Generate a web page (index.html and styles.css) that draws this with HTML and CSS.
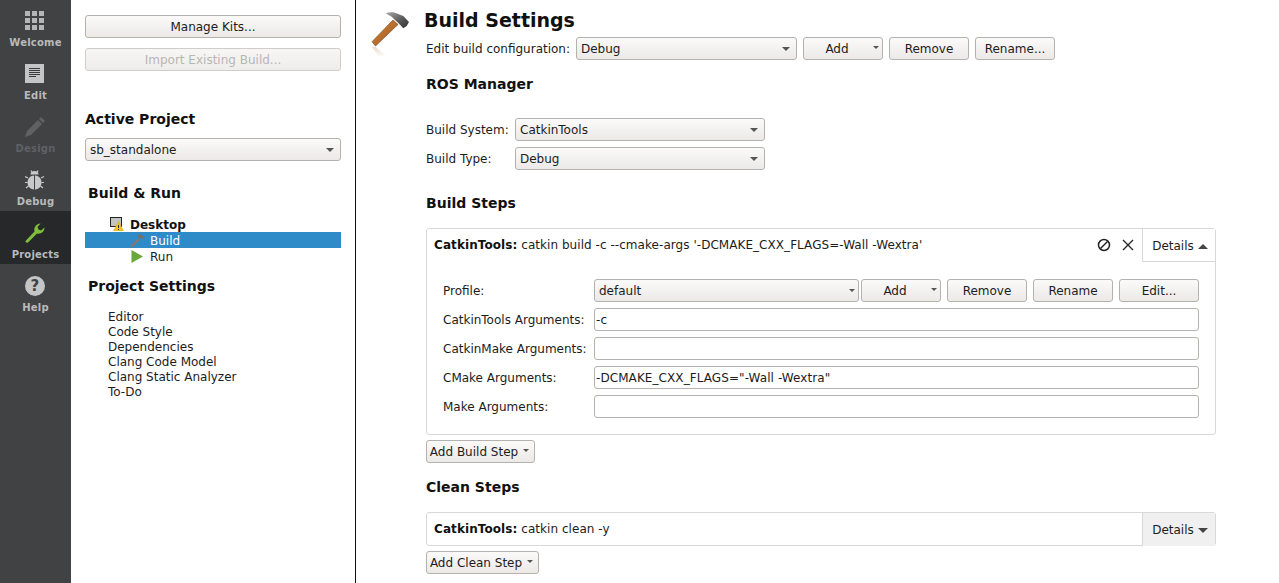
FILE: index.html
```html
<!DOCTYPE html>
<html lang="en">
<head>
<meta charset="utf-8">
<title>Projects</title>
<link rel="stylesheet" href="styles.css">
</head>
<body>
<div class="app">
  <nav class="rail">
    <div class="mode">
      <svg class="mode-icon" width="22" height="22" viewBox="0 0 22 22"><g fill="#b4b5b6"><rect x="0" y="0" width="5" height="5"/><rect x="7" y="0" width="5" height="5"/><rect x="14" y="0" width="5" height="5"/><rect x="0" y="7" width="5" height="5"/><rect x="7" y="7" width="5" height="5"/><rect x="14" y="7" width="5" height="5"/><rect x="0" y="14" width="5" height="5"/><rect x="7" y="14" width="5" height="5"/><rect x="14" y="14" width="5" height="5"/></g></svg>
      <span>Welcome</span>
    </div>
    <div class="mode">
      <svg class="mode-icon" width="22" height="22" viewBox="0 0 22 22"><rect x="0" y="0" width="19" height="19" fill="#c4c5c6"/><path d="M4 4.500h11M4 6.500h11M4 8.500h11M4 10.500h11M4 12.500h7" stroke="#3a3b3c" stroke-width="1"/></svg>
      <span>Edit</span>
    </div>
    <div class="mode mode-off">
      <svg class="mode-icon" width="22" height="22" viewBox="0 0 22 22"><path d="M0 20l2-6L13 3l4 4L6 18z M14 2l2-2 4 4-2 2z" fill="#5f6163"/></svg>
      <span>Design</span>
    </div>
    <div class="mode">
      <svg class="mode-icon" width="22" height="22" viewBox="0 0 22 22"><g fill="#c8c9ca"><path d="M5.500 4.500a4 3.500 0 0 1 8 0z"/><path d="M9 5.500v14C5.500 19.500 2.500 16.500 2.500 12.500 2.500 9 4.500 6 9 5.500z"/><path d="M10 5.500v14c3.500 0 6.500-3 6.500-7C16.500 9 14.500 6 10 5.500z"/></g><path d="M6 0.500l1 2M13 0.500l-1 2M0 6.500l3 1.500M19 6.500l-3 1.500M0 12.500h2.500M19 12.500h-2.500M1 18l2.500-2M18 18l-2.500-2" stroke="#c8c9ca" stroke-width="1.200" fill="none"/></svg>
      <span>Debug</span>
    </div>
    <div class="mode mode-active">
      <svg class="mode-icon" width="22" height="22" viewBox="0 0 22 22"><path d="M0.500 18L9.500 8.500C8.500 5 10.500 1 15.500 0.500L12.500 4l1 2.500 2.500 1L19.500 4.500C19.500 9 15.500 11.500 12 10.500L3 19.500c-1 .8-3-.5-2.500-1.500z" fill="#7fc03a"/></svg>
      <span>Projects</span>
    </div>
    <div class="mode">
      <svg class="mode-icon" width="22" height="22" viewBox="0 0 22 22"><circle cx="10" cy="10" r="10" fill="#c4c5c6"/><text x="10" y="15" text-anchor="middle" class="help-mark">?</text></svg>
      <span>Help</span>
    </div>
  </nav>

  <aside class="side">
    <button class="btn btn-wide">Manage Kits...</button>
    <button class="btn btn-wide btn-off">Import Existing Build...</button>
    <h2 class="side-h active-h">Active Project</h2>
    <div class="combo combo-side"><span>sb_standalone</span><i class="arrow"></i></div>
    <h2 class="side-h inset build-run">Build &amp; Run</h2>
    <div class="tree">
      <div class="tree-row tree-top">
        <svg class="tree-kit" width="14" height="14" viewBox="0 0 14 14"><rect x="0.500" y="0.500" width="11" height="9" fill="#c4c4c4" stroke="#222"/><path d="M8.500 4.500L13.500 14H3.500z" fill="#f4c21f" stroke="#d8a510" stroke-width=".5"/><path d="M8.500 8v3M8.500 12v1" stroke="#333"/></svg>
        <b>Desktop</b>
      </div>
      <div class="tree-row tree-sub tree-sel">
        <svg width="15" height="15" viewBox="0 0 15 15"><path d="M0.500 13L8 5.500l1.500 1.500L2 14.500z" fill="#8f7562"/><path d="M7 3C9 1 11 1 12 2l2 2.500-1 1.500-2-1-1.500 1z" fill="#707070"/></svg>
        <span>Build</span>
      </div>
      <div class="tree-row tree-sub">
        <svg width="15" height="15" viewBox="0 0 15 15"><path d="M1.500 1L13 7.500 1.500 14z" fill="#6aa83a"/></svg>
        <span>Run</span>
      </div>
    </div>
    <h2 class="side-h inset settings-h">Project Settings</h2>
    <ul class="links">
      <li>Editor</li>
      <li>Code Style</li>
      <li>Dependencies</li>
      <li>Clang Code Model</li>
      <li>Clang Static Analyzer</li>
      <li>To-Do</li>
    </ul>
  </aside>

  <main class="main">
    <div class="hammer-col">
      <svg width="38" height="50" viewBox="0 0 38 50">
        <defs>
          <linearGradient id="handle" x1="0" y1="0" x2="1" y2="1"><stop offset="0" stop-color="#d98b3e"/><stop offset="1" stop-color="#96531c"/></linearGradient>
          <linearGradient id="head" x1="0" y1="0" x2="1" y2="1"><stop offset="0" stop-color="#a8a8a8"/><stop offset=".6" stop-color="#555"/><stop offset="1" stop-color="#333"/></linearGradient>
          <linearGradient id="shade" x1="0" y1="0" x2="0" y2="1"><stop offset="0" stop-color="#ecd9c8"/><stop offset="1" stop-color="#ffffff"/></linearGradient>
        </defs>
        <path d="M1 36L4.500 36 16 46H8z" fill="url(#shade)"/>
        <path d="M1 30.700L22 9l5 4.500L4.500 35z" fill="url(#handle)" stroke="#7a4516" stroke-width=".6"/>
        <path d="M14.700 2.300C18 1 21 1 24 1.700L32.300 5 38 11 35.700 15 32.300 17.300 28.300 13 24 9 20.700 5.700z" fill="url(#head)"/>
      </svg>
    </div>
    <div class="content">
      <h1 class="title">Build Settings</h1>
      <div class="row config-row">
        <label class="config-label">Edit build configuration:</label>
        <div class="combo combo-config"><span>Debug</span><i class="arrow"></i></div>
        <button class="btn btn-add"><span>Add</span><i class="arrow arrow-s"></i></button>
        <button class="btn btn-80">Remove</button>
        <button class="btn btn-80">Rename...</button>
      </div>
      <h3 class="sec ros-h">ROS Manager</h3>
      <div class="row ros-row">
        <label class="ros-label">Build System:</label>
        <div class="combo combo-ros"><span>CatkinTools</span><i class="arrow"></i></div>
      </div>
      <div class="row ros-row ros-row-2">
        <label class="ros-label">Build Type:</label>
        <div class="combo combo-ros"><span>Debug</span><i class="arrow"></i></div>
      </div>
      <h3 class="sec steps-h">Build Steps</h3>
      <section class="step">
        <header class="step-head">
          <div class="step-text"><b>CatkinTools:</b> catkin build -c --cmake-args '-DCMAKE_CXX_FLAGS=-Wall -Wextra'</div>
          <svg class="step-ic" width="14" height="14" viewBox="0 0 14 14"><circle cx="7" cy="7" r="5.500" fill="none" stroke="#222" stroke-width="1.500"/><path d="M3.500 10.500l7-7" stroke="#222" stroke-width="1.500"/></svg>
          <svg class="step-ic step-x" width="14" height="14" viewBox="0 0 14 14"><path d="M2 2l10 10M12 2L2 12" stroke="#222" stroke-width="1.300"/></svg>
          <div class="details details-open"><span>Details</span><i class="tri tri-up"></i></div>
        </header>
        <div class="step-body">
          <div class="row field">
            <label class="f-label">Profile:</label>
            <div class="combo combo-profile"><span>default</span><i class="arrow arrow-s"></i></div>
            <button class="btn btn-add btn-add-2"><span>Add</span><i class="arrow arrow-s"></i></button>
            <button class="btn btn-80">Remove</button>
            <button class="btn btn-80">Rename</button>
            <button class="btn btn-80">Edit...</button>
          </div>
          <div class="row field"><label class="f-label">CatkinTools Arguments:</label><input class="input" type="text" value="-c"></div>
          <div class="row field"><label class="f-label">CatkinMake Arguments:</label><input class="input" type="text" value=""></div>
          <div class="row field"><label class="f-label">CMake Arguments:</label><input class="input" type="text" value="-DCMAKE_CXX_FLAGS=&quot;-Wall -Wextra&quot;"></div>
          <div class="row field"><label class="f-label">Make Arguments:</label><input class="input" type="text" value=""></div>
        </div>
      </section>
      <button class="btn btn-step"><span>Add Build Step</span><i class="arrow arrow-xs"></i></button>
      <h3 class="sec clean-h">Clean Steps</h3>
      <section class="step step-closed">
        <header class="step-head">
          <div class="step-text"><b>CatkinTools:</b> catkin clean -y</div>
          <div class="details"><span>Details</span><i class="tri"></i></div>
        </header>
      </section>
      <button class="btn btn-step btn-step-2"><span>Add Clean Step</span><i class="arrow arrow-xs"></i></button>
    </div>
  </main>
</div>
</body>
</html>
```
FILE: styles.css
```css
* { box-sizing: border-box; }
html, body { margin: 0; height: 100%; overflow: hidden; background: #fff; }
body { font-family: "DejaVu Sans", sans-serif; font-size: 12px; color: #1c1c1c; }
.app { display: flex; height: 583px; width: 1279px; }

.rail { flex: 0 0 71px; background: #404244; display: flex; flex-direction: column; }
.mode { height: 53px; flex: none; display: flex; flex-direction: column; align-items: center; padding-top: 12px; font-size: 10px; font-weight: 700; color: #b9babb; letter-spacing: .2px; }
.mode:first-child { margin-top: -1px; }
.mode-icon { display: block; margin: 0 0 4px 1px; flex: none; height: 22px; }
.mode-off { color: #5f6163; }
.mode-active { background: #26282a; }
.help-mark { font: 700 15px "DejaVu Sans", sans-serif; fill: #404244; }

.side { flex: 0 0 285px; border-right: 1px solid #111; padding: 15px 14px 0; }
.btn { font: 12px "DejaVu Sans", sans-serif; color: #1c1c1c; height: 23px; padding: 0; border: 1px solid #b4b2ae; border-radius: 3px; background: linear-gradient(#fbfafa, #ece9e7); display: flex; align-items: center; justify-content: center; white-space: nowrap; }
.btn-wide { width: 256px; }
.btn-wide + .btn-wide { margin-top: 10px; }
.btn-off { color: #b8b6b4; border-color: #cfcdca; background: linear-gradient(#f7f6f5, #efedec); }
.side-h { margin: 0; font-size: 14px; font-weight: 700; color: #111; line-height: 17px; }
.inset { padding-left: 3px; }
.active-h { margin-top: 40px; }
.build-run { margin-top: 24px; }
.combo { height: 23px; border: 1px solid #b4b2ae; border-radius: 3px; background: linear-gradient(#fbfafa, #ece9e7); display: flex; align-items: center; justify-content: space-between; padding: 0 5px 0 4px; }
.combo-side { margin-top: 10px; width: 256px; }
.arrow { width: 0; height: 0; flex: none; border-left: 4px solid transparent; border-right: 4px solid transparent; border-top: 4px solid #555; margin-right: 1px; }
.arrow-s { border-left-width: 3.500px; border-right-width: 3.500px; border-top-width: 3px; }
.arrow-xs { border-left-width: 3px; border-right-width: 3px; border-top-width: 3px; margin: 0 0 2px 5px; }

.tree { margin-top: 14px; width: 256px; }
.tree-row { height: 16px; display: flex; align-items: center; }
.tree-top { padding-left: 25px; font-size: 12px; }
.tree-top b { margin-left: 6px; color: #111; padding-top: 1px; }
.tree-kit { flex: none; margin-top: -1px; }
.tree-sub { padding-left: 45px; }
.tree-sub span { margin-left: 5px; padding-top: 1px; }
.tree-sel { background: #2e8bc8; color: #fff; }
.settings-h { margin-top: 14px; }
.links { list-style: none; margin: 15px 0 0; padding: 0 0 0 23px; line-height: 15px; }

.main { flex: 1; display: flex; min-width: 0; }
.hammer-col { flex: 0 0 70px; padding: 11px 0 0 15px; }
.content { flex: 1; min-width: 0; }
.title { margin: 9px 0 0 -2px; font-size: 19px; font-weight: 700; line-height: 23px; color: #111; }
.row { display: flex; align-items: center; }
.config-row { margin-top: 5px; }
.config-label { width: 150px; }
.combo-config { width: 221px; }
.config-row .btn { margin-left: 6px; }
.btn-add { width: 80px; position: relative; padding-right: 12px; }
.btn-add .arrow { position: absolute; right: 3px; top: 8px; margin: 0; }
.btn-80 { width: 80px; }
.sec { margin: 0; font-size: 14px; font-weight: 700; line-height: 16px; color: #111; }
.ros-h { margin-top: 16px; }
.ros-row { margin-top: 26px; }
.ros-row-2 { margin-top: 6px; }
.ros-label { width: 89px; }
.combo-ros { width: 250px; }
.steps-h { margin-top: 25px; }

.step { margin-top: 17px; width: 790px; height: 207px; border: 1px solid #d8d8d8; border-radius: 3px; }
.step-closed { margin-top: 17px; height: 34px; }
.step-head { display: flex; align-items: center; height: 32px; }
.step-text { flex: 1; padding-left: 7px; margin-top: -1px; white-space: nowrap; letter-spacing: .05px; }
.step-text b { color: #111; letter-spacing: .08px; }
.step-ic { flex: none; margin-right: 10px; }
.step-x { margin-right: 7px; }
.details { flex: none; width: 73px; height: 33px; border-left: 1px solid #d8d8d8; background: #f0f0f0; display: flex; align-items: center; justify-content: center; gap: 4px; padding: 2px 0 0 2px; }
.details-open { background: #fff; border-bottom: 1px solid #d8d8d8; align-self: flex-start; }
.tri { width: 0; height: 0; border-left: 5px solid transparent; border-right: 5px solid transparent; border-top: 5px solid #444; }
.tri-up { border-top: 0; border-bottom: 5px solid #444; }
.step-body { padding: 18px 16px 0 16px; }
.field { margin-bottom: 6px; }
.f-label { width: 151px; flex: none; }
.input { width: 605px; height: 23px; border: 1px solid #b4b2ae; border-radius: 3px; padding: 0 1px; font: 12px "DejaVu Sans", sans-serif; color: #1c1c1c; background: #fff; outline: 0; letter-spacing: .08px; }
.combo-profile { width: 265px; padding-right: 2px; }
.field .btn { margin-left: 6px; }
.field .btn-add-2 { margin-left: 2px; }
.btn-step { margin-top: 5px; padding: 0 5px 0 3px; width: 109px; }
.btn-step-2 { width: 113px; }
.clean-h { margin-top: 16px; }
```
